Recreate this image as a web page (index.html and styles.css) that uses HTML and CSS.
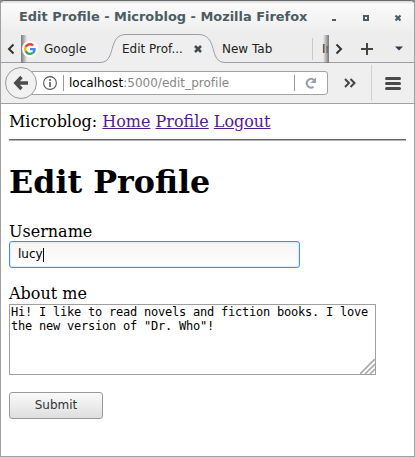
FILE: index.html
```html
<!DOCTYPE html>
<html lang="en">
<head>
<meta charset="utf-8">
<title>Edit Profile - Microblog</title>
<link rel="stylesheet" href="styles.css">
</head>
<body>
<div class="window">
  <header class="titlebar">
    <span class="title">Edit Profile - Microblog - Mozilla Firefox</span>
    <svg class="controls" width="80" height="12" viewBox="0 0 80 12">
      <path d="M2 8h4" stroke="#4b5c64" stroke-width="2"/>
      <path d="M34 4h4v4h-4z" fill="none" stroke="#4b5c64" stroke-width="2"/>
      <path d="M65.500 3.500l5 5M70.500 3.500l-5 5" stroke="#4b5c64" stroke-width="2.200"/>
    </svg>
  </header>
  <nav class="tabs">
    <svg class="tabline" width="413" height="30" viewBox="0 0 413 30">
      <path class="tabshape" d="M0 28.500H99C116 28.500 106 .5 125 .5H197C218 .5 207 28.500 224 28.500H413"/>
    </svg>
    <span class="scroll left"><svg width="8" height="12" viewBox="0 0 8 12"><path d="M6.500 1.500L2 6l4.500 4.500" fill="none" stroke="#333" stroke-width="2"/></svg></span>
    <span class="shade"></span>
    <span class="tab google">
      <span class="favicon"><svg width="12" height="12" viewBox="0 0 48 48">
        <path fill="#ea4335" d="M24 9.500c3.500 0 6.700 1.200 9.200 3.600l6.900-6.900C35.900 2.400 30.500 0 24 0 14.600 0 6.500 5.400 2.600 13.200l8 6.200C12.400 13.700 17.700 9.500 24 9.500z"/>
        <path fill="#4285f4" d="M47 24.600c0-1.600-.2-3.100-.4-4.600H24v9h12.900c-.6 3-2.300 5.500-4.800 7.200l7.700 6C44.400 38 47 32 47 24.600z"/>
        <path fill="#fbbc05" d="M10.500 28.600c-.5-1.500-.8-3-.8-4.600s.3-3.100.8-4.600l-8-6.200A24 24 0 0 0 2.600 34.800z"/>
        <path fill="#34a853" d="M24 48c6.500 0 11.900-2.100 15.900-5.800l-7.700-6c-2.200 1.500-4.900 2.300-8.200 2.300-6.300 0-11.600-4.200-13.500-9.900l-8 6.200C6.500 42.600 14.600 48 24 48z"/>
      </svg></span>
      Google
    </span>
    <span class="tab active">Edit Prof...</span>
    <svg class="close" width="10" height="10" viewBox="0 0 10 10"><path d="M2 2l6 6M8 2L2 8" stroke="#444b4e" stroke-width="2.500"/></svg>
    <span class="tab new">New Tab</span>
    <span class="divider"></span>
    <span class="tab cut">In</span>
    <span class="shade right"></span>
    <span class="scroll right"><svg width="8" height="12" viewBox="0 0 8 12"><path d="M1.500 1.500L6 6l-4.500 4.500" fill="none" stroke="#333" stroke-width="2"/></svg></span>
    <svg class="plus" width="12" height="12" viewBox="0 0 12 12"><path d="M6 0v12M0 6h12" stroke="#444" stroke-width="2"/></svg>
    <svg class="down" width="8" height="5" viewBox="0 0 8 5"><path d="M0 .5h8L4 4.500z" fill="#2f3a4a"/></svg>
  </nav>
  <div class="toolbar">
    <span class="back"><svg width="16" height="16" viewBox="0 0 16 16"><path d="M8.500 2L2.800 8l5.700 6M3 8h12" fill="none" stroke="#4c4c4c" stroke-width="3.400"/></svg></span>
    <div class="urlbar">
      <svg class="info" width="14" height="14" viewBox="0 0 14 14"><circle cx="7" cy="7" r="6.400" fill="none" stroke="#555" stroke-width="1.100"/><path d="M7 6v5M7 3v2" stroke="#555" stroke-width="1.600"/></svg>
      <span class="sep"></span>
      <span class="url"><b>localhost</b>:5000/edit_profile</span>
      <span class="sep end"></span>
      <svg class="reload" width="12" height="12" viewBox="0 0 12 12"><path d="M8.500 9.800A4.300 4.300 0 1 1 9 3" fill="none" stroke="#949fab" stroke-width="2"/><path d="M11 .5V6H5.500z" fill="#949fab"/></svg>
    </div>
    <svg class="more" width="12" height="10" viewBox="0 0 12 10"><path d="M1 1l4 4-4 4M6.500 1l4 4-4 4" fill="none" stroke="#444" stroke-width="2"/></svg>
    <span class="tooldiv"></span>
    <svg class="menu" width="16" height="13" viewBox="0 0 16 13"><path d="M1.500 1.500h13M1.500 6.500h13M1.500 11.500h13" stroke="#4a4a4a" stroke-width="3" stroke-linecap="round"/></svg>
  </div>
  <main class="page">
    <div class="links">Microblog: <a href="#">Home</a> <a href="#">Profile</a> <a href="#">Logout</a></div>
    <div class="rule"></div>
    <h1>Edit Profile</h1>
    <div class="label">Username</div>
    <div class="field">lucy<span class="caret"></span></div>
    <div class="label about">About me</div>
    <div class="area">Hi! I like to read novels and fiction books. I love<br>the new version of "Dr. Who"!
      <svg class="grip" width="15" height="15" viewBox="0 0 15 15"><path d="M0 15L15 0M5 15L15 5M10 15l5-5" stroke="#aaa" stroke-width="1.700"/></svg>
    </div>
    <button class="submit">Submit</button>
  </main>
</div>
</body>
</html>
```
FILE: styles.css
```css
* { box-sizing: border-box; }
body { margin: 0; background: #8a8a8a; }
.window {
  width: 415px; height: 457px; overflow: hidden;
  display: flex; flex-direction: column;
  border: 1px solid #a0a0a0; border-top-color: #6c6868;
  border-radius: 5px 5px 0 0; background: #fff;
  font-family: "DejaVu Sans", sans-serif;
}
svg { display: block; flex: none; }
.titlebar {
  height: 33px; flex: none; display: flex; align-items: center;
  padding-left: 18px; background: linear-gradient(#d8d8d8, #fbfbfb 3px, #ededed);
}
.title { width: 311px; font-size: 12.93px; font-weight: bold; color: #4b5c64; white-space: nowrap; line-height: 31px; height: 33px; }
.tabs {
  position: relative; height: 29px; flex: none; display: flex; align-items: center;
  background: #ededed; font-size: 12px; color: #222; white-space: nowrap;
}
.tabs > * { position: relative; flex: none; }
.tabs > .tabline { position: absolute; left: 0; top: 0; }
.tabshape { fill: #efefef; stroke: #9a9fa5; }
.scroll.left { margin-left: 6px; width: 14px; }
.shade { width: 6px; height: 28px; background: linear-gradient(90deg, #777, rgba(237,237,237,0)); }
.shade.right { background: linear-gradient(270deg, #777, rgba(237,237,237,0)); margin-left: -6px; }
.google { display: flex; align-items: center; gap: 6px; width: 95px; margin-left: -6px; }
.favicon { width: 16px; height: 16px; border-radius: 8px; background: #fff; padding: 2px; margin-left: 1px; }
.active { width: 71px; margin-left: 6px; }
.close { margin-right: 19px; }
.new { width: 90px; }
.divider { width: 1px; height: 22px; background: #c9c9c9; margin-right: 9px; }
.cut { width: 7px; overflow: hidden; }
.scroll.right { margin-left: 6px; }
.plus { margin-left: 18px; }
.down { margin-left: 22px; }
.toolbar {
  height: 41px; flex: none; display: flex; align-items: center;
  background: #efefef; border-bottom: 1px solid #a0a0a0;
}
.back {
  width: 32px; height: 32px; margin-left: 4px; border: 1px solid #999; border-radius: 50%;
  background: #f1f1f1; display: flex; align-items: center; justify-content: center; z-index: 1;
}
.urlbar {
  width: 303px; height: 24px; margin-left: -12px; padding-left: 17px; display: flex; align-items: center;
  background: #fff; border: 1px solid #a3a3a3; border-radius: 0 3px 3px 0; font-size: 12px;
}
.sep { width: 1px; height: 16px; background: #999; margin: 0 5px 0 6px; }
.url { width: 219px; color: #888; letter-spacing: 0.03px; }
.url b { font-weight: normal; color: #000; }
.sep.end { margin: 0 10px 0 6px; }
.more { margin-left: 16px; }
.tooldiv { width: 1px; height: 36px; background: #d0d0d0; margin: 0 13px 0 15px; }
.page { flex: 1; padding: 8px; font-family: "DejaVu Serif", serif; font-size: 16px; line-height: 19px; color: #000; }
.links { font-size: 15.98px; }
.links a { color: #551a8b; }
.rule { height: 2px; margin-top: 8px; background: linear-gradient(#646464 50%, #b4b4b4 50%); }
h1 { margin: 21px 0; font-size: 31.75px; line-height: 39px; font-weight: bold; }
.field {
  width: 291px; height: 27px; padding-left: 8px; display: flex; align-items: center;
  border: 1px solid #4a90d9; border-radius: 3px; background: linear-gradient(#f5f5f5, #fff);
  box-shadow: inset 0 0 0 1px #e0eaf5; font-family: "DejaVu Sans", sans-serif; font-size: 12px;
}
.caret { width: 1px; height: 14px; background: #000; }
.about { margin-top: 16px; }
.area {
  position: relative; width: 367px; height: 71px; margin-top: 1px; padding: 0 1px;
  border: 1px solid #a0a0a0; white-space: nowrap;
  font-family: "DejaVu Sans Mono", monospace; font-size: 12px; line-height: 14px; letter-spacing: -0.224px;
}
.grip { position: absolute; right: 0; bottom: 0; }
.submit {
  display: block; width: 94px; height: 27px; margin-top: 17px; padding: 0 0 2px 0;
  border: 1px solid #999; border-radius: 3px; background: linear-gradient(#fafafa, #dedede);
  font-family: "DejaVu Sans", sans-serif; font-size: 12px; color: #2e3436;
}
```
